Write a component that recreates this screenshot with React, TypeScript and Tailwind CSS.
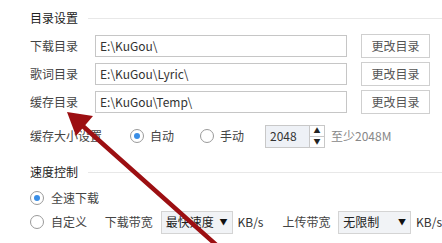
const font = { fontFamily: '"Microsoft YaHei", "Noto Sans CJK SC", "Noto Sans", sans-serif' };

function Radio({ checked }: { checked?: boolean }) {
  return (
    <span className="w-[14px] h-[14px] rounded-full border border-[#9a9a9a] bg-white flex items-center justify-center shrink-0">
      {checked && <span className="w-[6px] h-[6px] rounded-full bg-[#3a8ee6]" />}
    </span>
  );
}

function Header({ title }: { title: string }) {
  return (
    <div className="flex items-center h-[20px] text-[12px] text-[#222]">
      <span className="w-[58px]">{title}</span>
      <span className="flex-1 h-px bg-[#e8e8e8]" />
    </div>
  );
}

function DirRow({ label, path }: { label: string; path: string }) {
  return (
    <div className="flex items-center h-[28px]">
      <span className="w-[65px] text-[12px] text-[#444]">{label}</span>
      <div className="w-[252px] h-[22px] border border-[#c6c6c6] bg-white flex items-center px-[4px] text-[12px] text-[#333]">
        {path}
      </div>
      <button className="ml-[14px] w-[69px] h-[24px] border border-[#cfcfcf] bg-white text-[12px] text-[#555]">
        更改目录
      </button>
    </div>
  );
}

function Select({ value, w }: { value: string; w: string }) {
  return (
    <div className={`${w} h-[23px] border border-[#d4d4d4] bg-[#f1f3f6] flex items-center justify-between px-[4px] text-[12px] text-[#222]`}>
      <span>{value}</span>
      <span className="text-[8px] text-[#111]">▼</span>
    </div>
  );
}

export default function App() {
  return (
    <div className="relative w-[442px] h-[243px] overflow-hidden bg-white" style={font}>
      <div className="pl-[30px] pt-[8px] flex flex-col">
        <Header title="目录设置" />
        <div className="h-[4px]" />
        <DirRow label="下载目录" path="E:\KuGou\" />
        <DirRow label="歌词目录" path="E:\KuGou\Lyric\" />
        <DirRow label="缓存目录" path="E:\KuGou\Temp\" />

        <div className="flex items-center h-[28px] mt-[6px] text-[12px] text-[#444]">
          <span className="w-[100px]">缓存大小设置</span>
          <Radio checked />
          <span className="ml-[6px] w-[50px]">自动</span>
          <Radio />
          <span className="ml-[6px] w-[45px]">手动</span>
          <div className="flex h-[23px] border border-[#c8c8c8]">
            <div className="w-[43px] bg-[#eef1f6] flex items-center px-[4px] text-[#333]">2048</div>
            <div className="w-[15px] border-l border-[#c8c8c8] flex flex-col bg-white">
              <span className="flex-1 flex items-center justify-center text-[7px] leading-none text-[#222] border-b border-[#c8c8c8]">▲</span>
              <span className="flex-1 flex items-center justify-center text-[7px] leading-none text-[#222]">▼</span>
            </div>
          </div>
          <span className="ml-[6px] text-[#888]">至少2048M</span>
        </div>

        <div className="mt-[12px]">
          <Header title="速度控制" />
        </div>
        <div className="h-[4px]" />
        <div className="flex items-center gap-[7px] h-[24px] text-[12px] text-[#444]">
          <Radio checked />
          <span>全速下载</span>
        </div>
        <div className="flex items-center h-[24px] text-[12px] text-[#444]">
          <Radio />
          <span className="ml-[7px] w-[54px]">自定义</span>
          <span className="w-[56px]">下载带宽</span>
          <Select value="最快速度" w="w-[72px]" />
          <span className="ml-[5px] w-[45px] text-[#333]">KB/s</span>
          <span className="w-[56px]">上传带宽</span>
          <Select value="无限制" w="w-[73px]" />
          <span className="ml-[5px] text-[#333]">KB/s</span>
        </div>
        <div className="flex items-center h-[24px] mt-[4px]">
          <span className="w-[13px] h-[13px] border border-[#9a9a9a]" />
        </div>
      </div>

      <svg className="absolute inset-0 pointer-events-none" width="442" height="243" viewBox="0 0 442 243">
        <line x1="222" y1="250" x2="76" y2="120" stroke="#9c0f12" strokeWidth="4.5" strokeLinecap="round" />
        <polygon points="67,112 93,116 76,136" fill="#9c0f12" />
      </svg>
    </div>
  );
}
